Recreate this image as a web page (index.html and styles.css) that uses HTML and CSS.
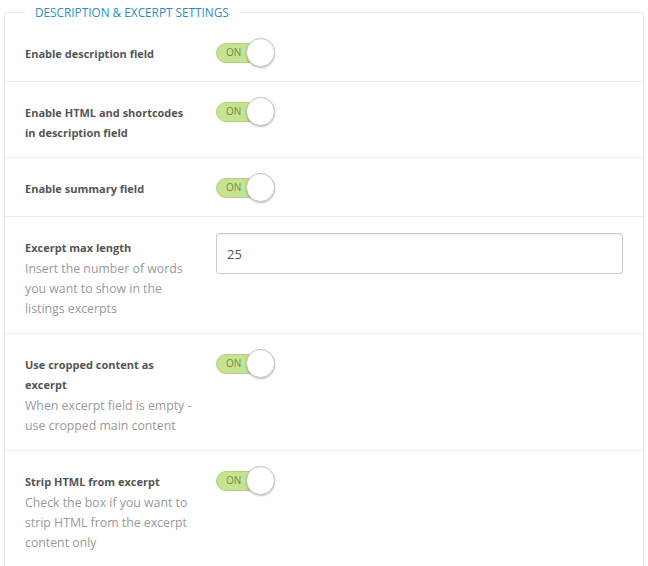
FILE: index.html
```html
<!DOCTYPE html>
<html>
<head>
<meta charset="utf-8">
<link rel="stylesheet" href="styles.css">
</head>
<body>
<fieldset class="settings">
  <legend class="settings-title">Description &amp; Excerpt Settings</legend>

  <div class="row row-first">
    <div class="label-col"><div class="label">Enable description field</div></div>
    <div class="control-col"><span class="toggle"><span class="toggle-text">ON</span><span class="knob"></span></span></div>
  </div>

  <div class="row">
    <div class="label-col"><div class="label">Enable HTML and shortcodes in description field</div></div>
    <div class="control-col"><span class="toggle"><span class="toggle-text">ON</span><span class="knob"></span></span></div>
  </div>

  <div class="row">
    <div class="label-col"><div class="label">Enable summary field</div></div>
    <div class="control-col"><span class="toggle"><span class="toggle-text">ON</span><span class="knob"></span></span></div>
  </div>

  <div class="row">
    <div class="label-col">
      <div class="label">Excerpt max length</div>
      <div class="desc">Insert the number of words you want to show in the listings excerpts</div>
    </div>
    <div class="control-col"><input class="text-input" type="text" value="25"></div>
  </div>

  <div class="row">
    <div class="label-col">
      <div class="label">Use cropped content as excerpt</div>
      <div class="desc">When excerpt field is empty - use cropped main content</div>
    </div>
    <div class="control-col"><span class="toggle"><span class="toggle-text">ON</span><span class="knob"></span></span></div>
  </div>

  <div class="row row-last">
    <div class="label-col">
      <div class="label">Strip HTML from excerpt</div>
      <div class="desc">Check the box if you want to strip HTML from the excerpt content only</div>
    </div>
    <div class="control-col"><span class="toggle"><span class="toggle-text">ON</span><span class="knob"></span></span></div>
  </div>
</fieldset>
</body>
</html>
```

FILE: styles.css
```css
html, body {
  margin: 0;
  padding: 0;
  background: #ffffff;
}

body {
  font-family: "Open Sans", "Noto Sans", sans-serif;
  color: #555555;
  padding-top: 4px;
}

.settings {
  margin: 0 4px;
  padding: 0;
  border: 1px solid #e8e8e8;
  border-radius: 3px;
  min-width: 0;
}

.settings-title {
  margin-left: 20px;
  padding: 0 10px;
  font-size: 11.8px;
  line-height: 16px;
  text-transform: uppercase;
  color: #2a8dc2;
}

.row {
  display: grid;
  grid-template-columns: 191px 1fr;
  padding: 15px 20px 14px 20px;
  border-bottom: 1px solid #ececec;
}

.row-first {
  padding-top: 18px;
}

.row-last {
  border-bottom: none;
  padding-bottom: 24px;
}

.label-col {
  padding-top: 6px;
}

.label {
  font-size: 11px;
  font-weight: 700;
  line-height: 20px;
  color: #555555;
  max-width: 168px;
}

.desc {
  margin-top: 1px;
  font-size: 12.3px;
  line-height: 20px;
  color: #999999;
  max-width: 168px;
}

.control-col {
  display: flex;
  align-items: flex-start;
}

.toggle {
  position: relative;
  display: inline-block;
  width: 58px;
  height: 29px;
}

.toggle::before {
  content: "";
  position: absolute;
  left: 0;
  top: 5px;
  width: 46px;
  height: 18px;
  border: 1px solid #b2cf7a;
  border-radius: 10px;
  background: #c6e48f;
}

.toggle-text {
  position: absolute;
  left: 10px;
  top: 8px;
  font-size: 10px;
  line-height: 12px;
  color: #6f8a45;
}

.knob {
  position: absolute;
  left: 30px;
  top: 0;
  width: 27px;
  height: 27px;
  border: 1px solid #c4c4c4;
  border-radius: 50%;
  background: #ffffff;
  box-shadow: 0 1px 2px rgba(0, 0, 0, 0.25);
}

.text-input {
  box-sizing: border-box;
  width: 407px;
  height: 41px;
  margin: 1px 0 0 0;
  padding: 0 10px;
  border: 1px solid #cccccc;
  border-radius: 3px;
  box-shadow: inset 0 1px 2px rgba(0, 0, 0, 0.07);
  font-family: "Open Sans", "Noto Sans", sans-serif;
  font-size: 13px;
  color: #555555;
  outline: none;
}
```
